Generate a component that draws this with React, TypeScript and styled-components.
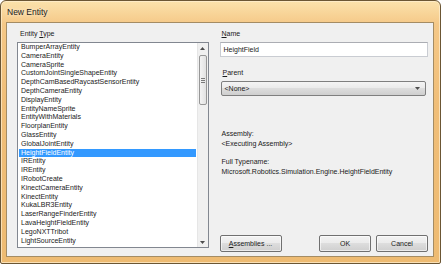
import React from "react";
import styled, { createGlobalStyle } from "styled-components";

const Global = createGlobalStyle`
  html, body { margin: 0; padding: 0; background: #ffffff; }
  body { font-family: "Liberation Sans", Arial, sans-serif; }
`;

const Window = styled.div`
  width: 441px;
  height: 264px;
  box-sizing: border-box;
  border: 1px solid #6b5634;
  border-radius: 6px 6px 2px 2px;
  background: linear-gradient(180deg, #fbe2ac 0%, #f5c887 9%, #f0be78 40%, #eebb72 100%);
  box-shadow: inset 0 0 0 1px rgba(255, 240, 210, 0.7);
  padding: 0 6px 6px 5px;
  display: flex;
  flex-direction: column;
`;

const TitleBar = styled.div`
  height: 21px;
  display: flex;
  align-items: center;
  padding-left: 1px;
  font-size: 8.5px;
  color: #1b1b1b;
  text-shadow: 0 0 4px rgba(255, 255, 255, 0.9);
`;

const Client = styled.div`
  flex: 1;
  box-sizing: border-box;
  border: 1px solid #a48c64;
  background: #f0f0f0;
  padding: 6px 5px 2px 10px;
  display: flex;
  gap: 11px;
  font-size: 7px;
  color: #1a1a1a;
`;

const LeftCol = styled.div`
  width: 192px;
  display: flex;
  flex-direction: column;
`;

const Label = styled.div<{ $indent?: number }>`
  height: 13px;
  line-height: 9px;
  padding-left: ${(p) => p.$indent ?? 3}px;
`;

const Key = styled.span`
  text-decoration: underline;
`;

const ListBox = styled.div`
  height: 206px;
  box-sizing: border-box;
  border: 1px solid #828790;
  background: #ffffff;
  display: flex;
`;

const Items = styled.div`
  flex: 1;
  padding: 0 1px;
  overflow: hidden;
`;

const Item = styled.div<{ $selected?: boolean }>`
  height: 8.8px;
  line-height: 8.8px;
  padding-left: 2px;
  white-space: nowrap;
  background: ${(p) => (p.$selected ? "#3399ff" : "transparent")};
  color: ${(p) => (p.$selected ? "#ffffff" : "#1a1a1a")};
`;

const ScrollBar = styled.div`
  width: 10px;
  background: #f0f0f0;
  border-left: 1px solid #e6e6e6;
  display: flex;
  flex-direction: column;
  align-items: center;
`;

const Arrow = styled.div`
  height: 10px;
  width: 100%;
  display: flex;
  align-items: center;
  justify-content: center;
`;

const Thumb = styled.div`
  margin-top: 2px;
  height: 50px;
  width: 8px;
  box-sizing: border-box;
  border: 1px solid #979797;
  border-radius: 2px;
  background: linear-gradient(90deg, #f3f3f3, #e2e2e2);
  display: flex;
  flex-direction: column;
  align-items: center;
  justify-content: center;
  gap: 1px;
`;

const Grip = styled.div`
  width: 4px;
  height: 1px;
  background: #7a7a7a;
`;

const Spacer = styled.div`
  flex: 1;
`;

const RightCol = styled.div`
  width: 209px;
  display: flex;
  flex-direction: column;
`;

const NameInput = styled.div`
  height: 15px;
  box-sizing: border-box;
  border: 1px solid #c9ccd2;
  border-top-color: #abadb3;
  background: #ffffff;
  padding-left: 3px;
  line-height: 13px;
  margin-bottom: 11px;
`;

const Combo = styled.div`
  margin-left: 1px;
  width: 205px;
  height: 15px;
  box-sizing: border-box;
  border: 1px solid #7f7f7f;
  border-radius: 2px;
  background: linear-gradient(180deg, #f4f4f4 0%, #ebebeb 45%, #dddddd 50%, #cfcfcf 100%);
  padding: 0 5px 0 3px;
  display: flex;
  align-items: center;
  justify-content: space-between;
`;

const InfoBlock = styled.div`
  margin-top: 33px;
  padding-left: 2px;
  line-height: 10px;
`;

const InfoGap = styled.div`
  height: 8px;
`;

const ButtonRow = styled.div`
  display: flex;
  align-items: center;
  padding-bottom: 2px;
`;

const Button = styled.div<{ $w: number }>`
  width: ${(p) => p.$w}px;
  height: 17px;
  box-sizing: border-box;
  border: 1px solid #707070;
  border-radius: 2px;
  background: linear-gradient(180deg, #f3f3f3 0%, #ebebeb 45%, #dddddd 50%, #cfcfcf 100%);
  box-shadow: inset 0 0 0 1px rgba(255, 255, 255, 0.6);
  display: flex;
  align-items: center;
  justify-content: center;
`;

const ButtonGap = styled.div`
  width: 5px;
`;

const items = [
  "BumperArrayEntity",
  "CameraEntity",
  "CameraSprite",
  "CustomJointSingleShapeEntity",
  "DepthCamBasedRaycastSensorEntity",
  "DepthCameraEntity",
  "DisplayEntity",
  "EntityNameSprite",
  "EntityWithMaterials",
  "FloorplanEntity",
  "GlassEntity",
  "GlobalJointEntity",
  "HeightFieldEntity",
  "IREntity",
  "IREntity",
  "IRobotCreate",
  "KinectCameraEntity",
  "KinectEntity",
  "KukaLBR3Entity",
  "LaserRangeFinderEntity",
  "LavaHeightFieldEntity",
  "LegoNXTTribot",
  "LightSourceEntity",
];

const Tri = ({ up }: { up?: boolean }) => (
  <svg width="5" height="3" viewBox="0 0 5 3">
    <path d={up ? "M0 3 L2.5 0 L5 3 Z" : "M0 0 L5 0 L2.5 3 Z"} fill="#4d4d4d" />
  </svg>
);

export default function App() {
  return (
    <>
      <Global />
      <Window>
        <TitleBar>New Entity</TitleBar>
        <Client>
          <LeftCol>
            <Label>
              Entity <Key>T</Key>ype
            </Label>
            <ListBox>
              <Items>
                {items.map((it, i) => (
                  <Item key={i} $selected={it === "HeightFieldEntity"}>
                    {it}
                  </Item>
                ))}
              </Items>
              <ScrollBar>
                <Arrow>
                  <Tri up />
                </Arrow>
                <Thumb>
                  <Grip />
                  <Grip />
                  <Grip />
                </Thumb>
                <Spacer />
                <Arrow>
                  <Tri />
                </Arrow>
              </ScrollBar>
            </ListBox>
          </LeftCol>
          <RightCol>
            <Label $indent={2}>
              <Key>N</Key>ame
            </Label>
            <NameInput>HeightField</NameInput>
            <Label $indent={3}>
              <Key>P</Key>arent
            </Label>
            <Combo>
              <span>&lt;None&gt;</span>
              <Tri />
            </Combo>
            <InfoBlock>
              <div>Assembly:</div>
              <div>&lt;Executing Assembly&gt;</div>
              <InfoGap />
              <div>Full Typename:</div>
              <div>Microsoft.Robotics.Simulation.Engine.HeightFieldEntity</div>
            </InfoBlock>
            <Spacer />
            <ButtonRow>
              <Button $w={62}>
                <span>
                  <Key>A</Key>ssemblies ...
                </span>
              </Button>
              <Spacer />
              <Button $w={52}>OK</Button>
              <ButtonGap />
              <Button $w={52}>Cancel</Button>
            </ButtonRow>
          </RightCol>
        </Client>
      </Window>
    </>
  );
}
